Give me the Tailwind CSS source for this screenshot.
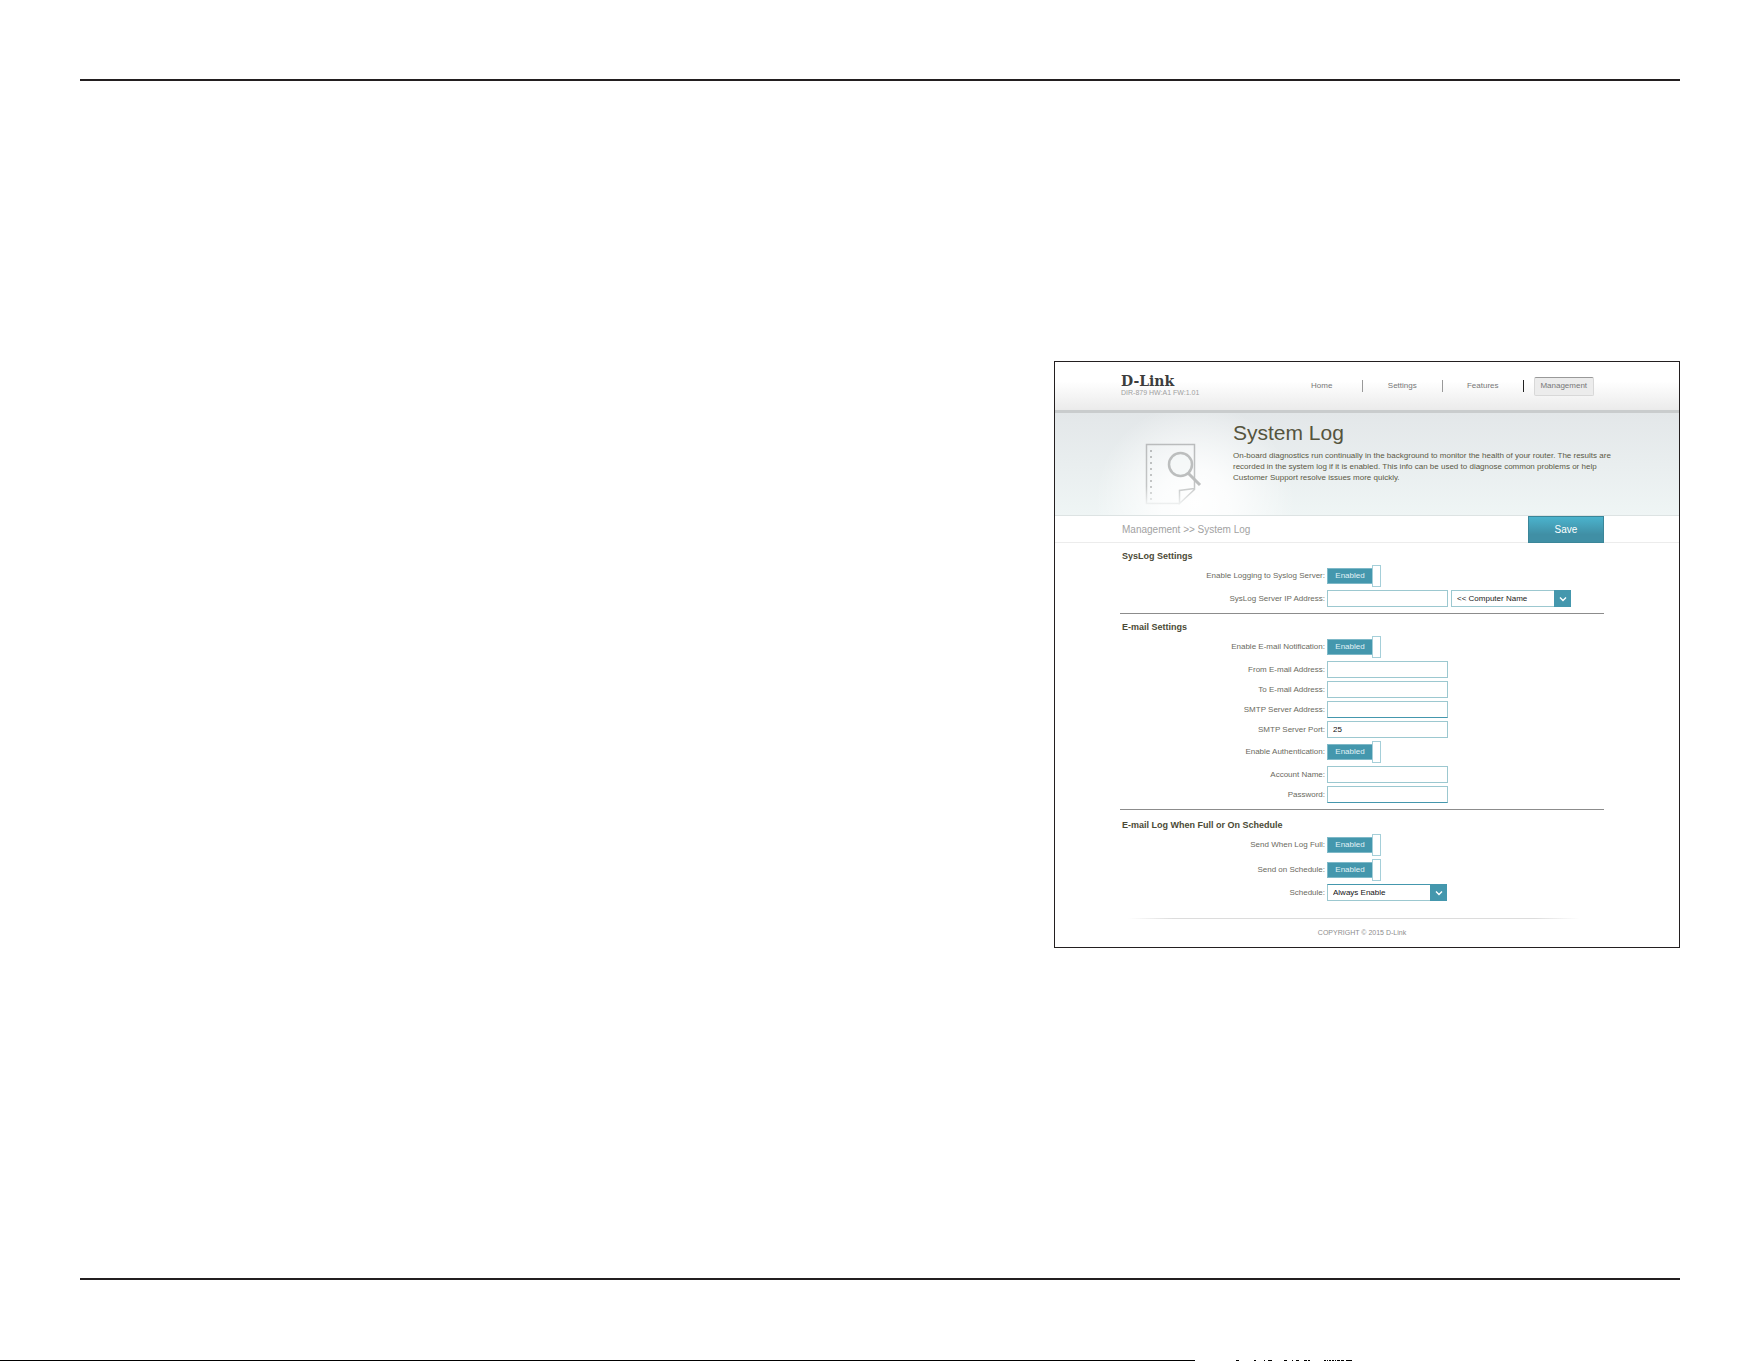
<!DOCTYPE html>
<html lang="en">
<head>
<meta charset="utf-8">
<title>System Log</title>
<script src="https://cdn.jsdelivr.net/npm/@tailwindcss/browser@4"></script>
</head>
<body class="flex min-h-screen flex-col bg-white font-['Liberation_Sans',Arial,sans-serif] text-[8px] leading-[12px] text-[#6a6a60]">
<div class="flex grow flex-col border-y-2 border-[#231f20] mt-[79px] mb-[81px] ml-20 mr-[81px]">
<main class="mt-[280px] ml-auto w-full max-w-[626px] border border-[#231f20] bg-white">
  <header class="flex h-[51px] items-center justify-between border-b-[3px] border-[#c9cccd] bg-linear-to-b from-white from-40% to-[#ebebeb] pr-[75px] pl-[66px]">
    <div>
      <div class="font-['DejaVu_Serif',serif] text-[14px] leading-[13px] font-bold text-[#3c3d3d]">D-Link</div>
      <div class="text-[7px] leading-[9px] text-[#a0a0a0]">DIR-879 HW:A1 FW:1.01</div>
    </div>
    <nav class="w-[322px]">
      <ul class="grid grid-cols-4 text-[#777]">
        <li class="flex h-3 items-center justify-center border-r border-[#999]"><a href="#">Home</a></li>
        <li class="flex h-3 items-center justify-center border-r border-[#999]"><a href="#">Settings</a></li>
        <li class="flex h-3 items-center justify-center border-r border-[#222]"><a href="#">Features</a></li>
        <li class="flex h-3 items-center justify-center"><a href="#" aria-current="page" class="flex h-[19px] w-[60px] items-center justify-center rounded-xs border border-[#d8d8d8] border-t-[#999] bg-[#ececec]">Management</a></li>
      </ul>
    </nav>
  </header>

  <div class="border-b border-[#dde3e3] bg-linear-to-b from-[#e3e7e9] to-[#eff5f5]">
    <div class="flex h-[102px] bg-[radial-gradient(circle_100px_at_140px_90px,#fff_0%,#fffc_35%,#fff0_100%)] pr-[72px] pl-[90px]">
      <svg class="mt-[30px] h-[62px] w-[58px] shrink-0" viewBox="0 0 58 62" fill="none" aria-hidden="true">
        <defs><linearGradient id="fade" gradientUnits="userSpaceOnUse" x1="0" y1="0" x2="0" y2="62"><stop offset="0" stop-color="#b9bbbc"/><stop offset=".7" stop-color="#c4c6c6"/><stop offset="1" stop-color="#f0f2f2"/></linearGradient></defs>
        <path d="M34.500 60.500H1.500V1.500H49.500V46.500L34.500 60.500V47.500L49.500 45.500" stroke="url(#fade)" stroke-width="1.500"/>
        <path d="M6 7V59" stroke="url(#fade)" stroke-width="2" stroke-dasharray="2 4"/>
        <circle cx="35.500" cy="21.500" r="11.500" fill="#f4f7f7" fill-opacity=".6" stroke="#bcbebe" stroke-width="2.500"/>
        <path d="M43.500 30.500L55 42" stroke="#bcbebe" stroke-width="3"/>
      </svg>
      <div class="ml-[30px] pt-2 text-[#5a5945]">
        <h1 class="text-[21px] leading-6 text-[#55543d]">System Log</h1>
        <p class="mt-[5px] leading-[11px] whitespace-nowrap">On-board diagnostics run continually in the background to monitor the health of your router. The results are<br>recorded in the system log if it is enabled. This info can be used to diagnose common problems or help<br>Customer Support resolve issues more quickly.</p>
      </div>
    </div>
  </div>

  <div class="flex h-[27px] items-stretch justify-between border-b border-[#ececec] pr-[75px] pl-[67px]">
    <p class="self-center pt-0.5 text-[10px] text-[#a2a2a2]">Management &gt;&gt; System Log</p>
    <button type="button" class="-mb-px w-[76px] border border-[#3b8699] bg-linear-to-b from-[#4bb3cd] to-[#408fa5] to-70% text-[10px] text-white">Save</button>
  </div>

  <form class="mr-[75px] ml-[65px]">
    <section class="border-b border-[#8c8c8c] py-1.5">
      <h2 class="mb-0.5 pl-0.5 text-[9px] leading-[14px] font-bold text-[#4b4a36]">SysLog Settings</h2>
      <div class="grid grid-cols-[205px_1fr] items-center gap-x-0.5 gap-y-[3px]">
        <span class="text-right">Enable Logging to Syslog Server:</span>
        <label class="flex items-center"><input type="checkbox" checked class="sr-only" aria-label="Enable Logging to Syslog Server"><span class="h-4 w-[45px] border border-r-0 border-[#7fb9c8] bg-[#4497ad] text-center leading-[14px] text-[#e2f2f6]">Enabled</span><span class="h-[22px] w-[9px] border border-[#a5cfd9] bg-white"></span></label>

        <label for="ip" class="text-right">SysLog Server IP Address:</label>
        <div class="flex gap-[3px]">
          <input id="ip" type="text" class="h-[17px] w-[121px] border border-[#9cc8d0] px-[5px]">
          <div class="relative flex w-[120px]">
            <select aria-label="Computer Name" class="h-[17px] w-full appearance-none border border-[#9cc8d0] bg-white px-[5px] leading-[14px] text-[#222]"><option>&lt;&lt; Computer Name</option></select>
            <span class="pointer-events-none absolute inset-y-0 right-0 flex w-[17px] items-center justify-center bg-[#4497ad]"><svg class="h-2 w-2" viewBox="0 0 8 8" fill="none" stroke="#fff" stroke-width="1.400" aria-hidden="true"><path d="M1 2.500L4 5.500L7 2.500"/></svg></span>
          </div>
        </div>
      </div>
    </section>

    <section class="border-b border-[#8c8c8c] py-1.5">
      <h2 class="mb-0.5 pl-0.5 text-[9px] leading-[14px] font-bold text-[#4b4a36]">E-mail Settings</h2>
      <div class="grid grid-cols-[205px_1fr] items-center gap-x-0.5 gap-y-[3px]">
        <span class="text-right">Enable E-mail Notification:</span>
        <label class="flex items-center"><input type="checkbox" checked class="sr-only" aria-label="Enable E-mail Notification"><span class="h-4 w-[45px] border border-r-0 border-[#7fb9c8] bg-[#4497ad] text-center leading-[14px] text-[#e2f2f6]">Enabled</span><span class="h-[22px] w-[9px] border border-[#a5cfd9] bg-white"></span></label>
        <label for="from" class="text-right">From E-mail Address:</label>
        <input id="from" type="text" class="h-[17px] w-[121px] border border-[#9cc8d0] px-[5px]">
        <label for="to" class="text-right">To E-mail Address:</label>
        <input id="to" type="text" class="h-[17px] w-[121px] border border-[#9cc8d0] px-[5px]">
        <label for="smtp" class="text-right">SMTP Server Address:</label>
        <input id="smtp" type="text" class="h-[17px] w-[121px] border border-[#9cc8d0] border-b-[#4497ad] px-[5px]">
        <label for="port" class="text-right">SMTP Server Port:</label>
        <input id="port" type="text" value="25" class="h-[17px] w-[121px] border border-[#9cc8d0] px-[5px] text-[#111]">
        <span class="text-right">Enable Authentication:</span>
        <label class="flex items-center"><input type="checkbox" checked class="sr-only" aria-label="Enable Authentication"><span class="h-4 w-[45px] border border-r-0 border-[#7fb9c8] bg-[#4497ad] text-center leading-[14px] text-[#e2f2f6]">Enabled</span><span class="h-[22px] w-[9px] border border-[#a5cfd9] bg-white"></span></label>
        <label for="account" class="text-right">Account Name:</label>
        <input id="account" type="text" class="h-[17px] w-[121px] border border-[#9cc8d0] px-[5px]">
        <label for="password" class="text-right">Password:</label>
        <input id="password" type="password" class="h-[17px] w-[121px] border border-[#9cc8d0] border-b-[#4497ad] px-[5px]">
      </div>
    </section>

    <section class="pt-2">
      <h2 class="mb-0.5 pl-0.5 text-[9px] leading-[14px] font-bold text-[#4b4a36]">E-mail Log When Full or On Schedule</h2>
      <div class="grid grid-cols-[205px_1fr] items-center gap-x-0.5 gap-y-[3px]">
        <span class="text-right">Send When Log Full:</span>
        <label class="flex items-center"><input type="checkbox" checked class="sr-only" aria-label="Send When Log Full"><span class="h-4 w-[45px] border border-r-0 border-[#7fb9c8] bg-[#4497ad] text-center leading-[14px] text-[#e2f2f6]">Enabled</span><span class="h-[22px] w-[9px] border border-[#a5cfd9] bg-white"></span></label>
        <span class="text-right">Send on Schedule:</span>
        <label class="flex items-center"><input type="checkbox" checked class="sr-only" aria-label="Send on Schedule"><span class="h-4 w-[45px] border border-r-0 border-[#7fb9c8] bg-[#4497ad] text-center leading-[14px] text-[#e2f2f6]">Enabled</span><span class="h-[22px] w-[9px] border border-[#a5cfd9] bg-white"></span></label>
        <label for="schedule" class="text-right">Schedule:</label>
        <div class="relative flex w-[120px]">
          <select id="schedule" class="h-[17px] w-full appearance-none border border-[#9cc8d0] border-t-[#4497ad] bg-white px-[5px] leading-[14px] text-[#111]"><option>Always Enable</option></select>
          <span class="pointer-events-none absolute inset-y-0 right-0 flex w-[17px] items-center justify-center bg-[#4497ad]"><svg class="h-2 w-2" viewBox="0 0 8 8" fill="none" stroke="#fff" stroke-width="1.400" aria-hidden="true"><path d="M1 2.500L4 5.500L7 2.500"/></svg></span>
        </div>
      </div>
    </section>
  </form>

  <footer class="mt-[17px] mr-[75px] ml-[65px] pb-2">
    <div class="ml-2 mr-6 h-px bg-[linear-gradient(90deg,#fff,#dcdcdc_10%,#dcdcdc_90%,#fff)]"></div>
    <p class="mt-2 text-center text-[7px] text-[#8d8d8d]">COPYRIGHT © 2015 D-Link</p>
  </footer>
</main>
</div>
<svg class="-mt-px h-px w-full" viewBox="0 0 1761 1" preserveAspectRatio="none" aria-hidden="true">
  <path d="M0 .5H1195M1236 .5h3M1254 .5h2M1264 .5h1M1268 .5h4M1284 .5h3M1292 .5h1M1296 .5h3M1304 .5h3M1308 .5h2M1324 .5h2M1327 .5h1M1329 .5h2M1332 .5h2M1335 .5h1M1337 .5h3M1341 .5h3M1346 .5h6" stroke="#000"/>
</svg>
</body>
</html>
